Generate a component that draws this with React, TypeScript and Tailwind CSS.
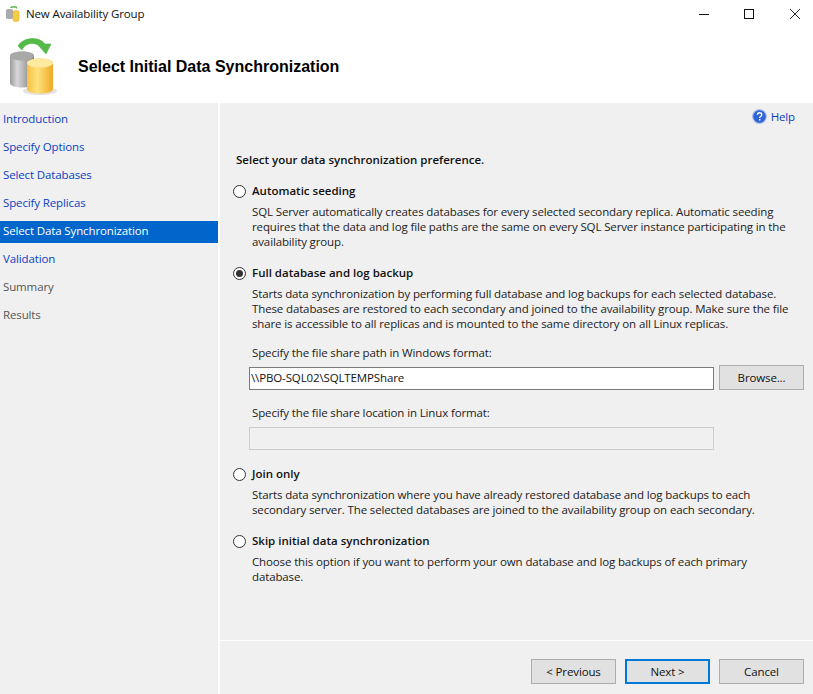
const FONT = "font-['Open_Sans','Noto_Sans',sans-serif]";

const STEPS: Array<{ label: string; state: "link" | "active" | "off" }> = [
  { label: "Introduction", state: "link" },
  { label: "Specify Options", state: "link" },
  { label: "Select Databases", state: "link" },
  { label: "Specify Replicas", state: "link" },
  { label: "Select Data Synchronization", state: "active" },
  { label: "Validation", state: "link" },
  { label: "Summary", state: "off" },
  { label: "Results", state: "off" },
];

function DbIcon() {
  return (
    <svg viewBox="0 0 50 60" className="w-[50px] h-[60px] block">
      <defs>
        <linearGradient id="gray" x1="0" x2="1" y1="0" y2="0">
          <stop offset="0" stopColor="#9a9a9a" />
          <stop offset="0.3" stopColor="#d8d8d8" />
          <stop offset="1" stopColor="#777777" />
        </linearGradient>
        <linearGradient id="gold" x1="0" x2="1" y1="0" y2="0">
          <stop offset="0" stopColor="#f6bf45" />
          <stop offset="0.4" stopColor="#ffe27a" />
          <stop offset="1" stopColor="#eeaa26" />
        </linearGradient>
      </defs>
      <ellipse cx="32" cy="55" rx="17" ry="4" fill="#e2e2e2" />
      <path d="M2 20c0-6 24-6 24 0v27c0 6-24 6-24 0z" fill="url(#gray)" />
      <ellipse cx="14" cy="20" rx="12" ry="4.5" fill="#a8a8a8" />
      <path d="M19 27c0-6 26-6 26 0v26c0 6-26 6-26 0z" fill="url(#gold)" />
      <ellipse cx="32" cy="27" rx="13" ry="4.5" fill="#ffe9a0" />
      <path d="M10 10C15 1 31 0 37 8l6 0-5 10-8-9c-5-3-13-2-16 5z" fill="#55bb48" stroke="#46a83c" strokeWidth="0.5" />
    </svg>
  );
}

function SmallIcon() {
  return (
    <svg viewBox="0 0 16 16" className="w-[16px] h-[16px] block">
      <path d="M0 4c0-1.500 7-1.500 7 0v8c0 1.500-7 1.500-7 0z" fill="#ababab" />
      <path d="M7 6c0-2 6-2 6 0v8c0 2-6 2-6 0z" fill="#f7cb45" stroke="#e3a92a" strokeWidth="0.5" />
      <path d="M5 1h5.500M10.500 1v1.500M5 1v1" fill="none" stroke="#58b84c" strokeWidth="1.300" />
    </svg>
  );
}

function HelpIcon() {
  return (
    <svg viewBox="0 0 16 16" className="w-[15px] h-[15px] block">
      <circle cx="8" cy="8" r="7.300" fill="#2f63d6" stroke="#a9bde6" strokeWidth="1.200" />
      <path d="M5.800 6.200c0-3 4.600-3 4.600-.2 0 1.800-2.200 1.800-2.200 3.600" fill="none" stroke="#fff" strokeWidth="1.500" />
      <rect x="7.400" y="10.600" width="1.600" height="1.700" fill="#fff" />
    </svg>
  );
}

function Radio({ on }: { on?: boolean }) {
  return (
    <span className="w-[13px] h-[13px] rounded-full border border-[#333] bg-white flex items-center justify-center shrink-0">
      {on ? <span className="w-[7px] h-[7px] rounded-full bg-[#333]" /> : null}
    </span>
  );
}

function Option({ label, on, lines, className }: { label: string; on?: boolean; lines: string[]; className: string }) {
  return (
    <div className={className}>
      <div className="flex items-center gap-[6px] h-[16px] pl-[13px] font-semibold tracking-normal text-[#111]">
        <Radio on={on} />
        <span className="-mt-[1px]">{label}</span>
      </div>
      <div className="pl-[32px] mt-[5px] leading-[15px] text-[#222] whitespace-nowrap">
        {lines.map((l) => (
          <div key={l}>{l}</div>
        ))}
      </div>
    </div>
  );
}

function Btn({ label, primary }: { label: string; primary?: boolean }) {
  return (
    <button
      className={
        "w-[85px] h-[25px] bg-[#e1e1e1] text-[#111] " +
        (primary ? "border-2 border-[#0078d7]" : "border border-[#adadad]")
      }
    >
      {label}
    </button>
  );
}

export default function App() {
  return (
    <div className={"w-[813px] h-[694px] bg-white flex flex-col overflow-hidden text-[11.5px] tracking-[-0.13px] " + FONT}>
      <div className="h-[28px] flex items-center shrink-0">
        <div className="pl-[6px] pr-[4px]">
          <SmallIcon />
        </div>
        <span className="text-[#111]">New Availability Group</span>
        <div className="ml-auto flex items-center h-full pr-[13px] pb-[1px]">
          <svg viewBox="0 0 10 10" className="w-[10px] h-[10px] mr-[35px]">
            <path d="M0 5.500h10" stroke="#111" strokeWidth="1" />
          </svg>
          <svg viewBox="0 0 10 10" className="w-[10px] h-[10px] mr-[36px]">
            <rect x="0.500" y="0.500" width="9" height="9" fill="none" stroke="#111" />
          </svg>
          <svg viewBox="0 0 10 10" className="w-[10px] h-[10px]">
            <path d="M0 0l10 10M10 0L0 10" stroke="#111" strokeWidth="0.900" />
          </svg>
        </div>
      </div>

      <div className="h-[75px] flex items-start shrink-0">
        <div className="pl-[8px] pt-[8px] w-[78px]">
          <DbIcon />
        </div>
        <h1 className="mt-[29px] text-[16px] leading-[20px] tracking-normal font-bold text-black font-['Liberation_Sans',sans-serif]">
          Select Initial Data Synchronization
        </h1>
      </div>

      <div className="flex-1 flex min-h-0">
        <nav className="w-[218px] bg-[#f0f0f0] pt-[6px] flex flex-col gap-[6px] shrink-0">
          {STEPS.map((s) => (
            <div
              key={s.label}
              className={
                "h-[22px] leading-[20px] pl-[3px] " +
                (s.state === "active"
                  ? "bg-[#0066cc] text-white"
                  : s.state === "link"
                    ? "text-[#0b3fc4]"
                    : "text-[#555]")
              }
            >
              {s.label}
            </div>
          ))}
        </nav>

        <main className="ml-[2px] flex-1 min-w-0 bg-[#f0f0f0] flex flex-col">
          <div className="flex-1">
            <div className="h-[26px] pt-[1px] flex justify-end items-center gap-[3px] pr-[18px]">
              <div className="-ml-[1px] mr-[1px]">
                <HelpIcon />
              </div>
              <span className="text-[#0b3fc4]">Help</span>
            </div>
            <div className="ml-[16px] mt-[23px] font-semibold tracking-normal text-[#111] leading-[16px]">
              Select your data synchronization preference.
            </div>
            <Option
              className="mt-[15px]"
              label="Automatic seeding"
              lines={[
                "SQL Server automatically creates databases for every selected secondary replica. Automatic seeding",
                "requires that the data and log file paths are the same on every SQL Server instance participating in the",
                "availability group.",
              ]}
            />
            <Option
              className="mt-[16px]"
              on
              label="Full database and log backup"
              lines={[
                "Starts data synchronization by performing full database and log backups for each selected database.",
                "These databases are restored to each secondary and joined to the availability group. Make sure the file",
                "share is accessible to all replicas and is mounted to the same directory on all Linux replicas.",
              ]}
            />
            <div className="ml-[32px] mt-[14px] leading-[15px] text-[#222]">Specify the file share path in Windows format:</div>
            <div className="flex items-end mt-[5px] ml-[29px]">
              <input
                readOnly
                value="\\PBO-SQL02\SQLTEMPShare"
                className="w-[465px] h-[23px] bg-white border border-[#7a7a7a] px-[1px] pb-[2px] text-[#111] outline-none"
              />
              <div className="ml-[5px]">
                <Btn label="Browse..." />
              </div>
            </div>
            <div className="ml-[32px] mt-[15px] leading-[15px] text-[#222]">Specify the file share location in Linux format:</div>
            <div className="ml-[29px] mt-[7px] w-[465px] h-[23px] border border-[#cccccc] bg-[#f0f0f0]" />
            <Option
              className="mt-[16px]"
              label="Join only"
              lines={[
                "Starts data synchronization where you have already restored database and log backups to each",
                "secondary server. The selected databases are joined to the availability group on each secondary.",
              ]}
            />
            <Option
              className="mt-[16px]"
              label="Skip initial data synchronization"
              lines={[
                "Choose this option if you want to perform your own database and log backups of each primary",
                "database.",
              ]}
            />
          </div>
          <div className="h-[54px] border-t border-white flex items-start justify-end gap-[9px] pt-[18px] pr-[9px] shrink-0">
            <Btn label="< Previous" />
            <Btn label="Next >" primary />
            <Btn label="Cancel" />
          </div>
        </main>
      </div>
    </div>
  );
}
